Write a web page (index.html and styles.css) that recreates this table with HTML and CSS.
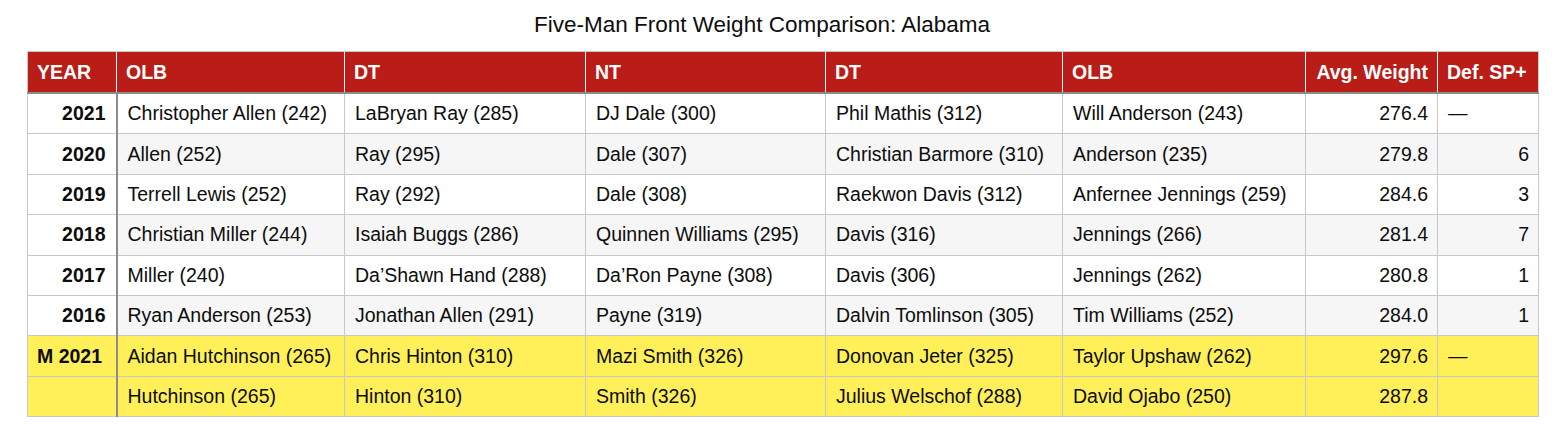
FILE: index.html
```html
<!DOCTYPE html>
<html>
<head>
<meta charset="utf-8">
<link rel="stylesheet" href="styles.css">
</head>
<body>
<div class="page">
  <div class="title">Five-Man Front Weight Comparison: Alabama</div>
  <table class="grid">
    <colgroup>
      <col class="c-year"><col class="c-olb1"><col class="c-dt1"><col class="c-nt"><col class="c-dt2"><col class="c-olb2"><col class="c-avg"><col class="c-sp">
    </colgroup>
    <thead>
      <tr>
        <th>YEAR</th><th>OLB</th><th>DT</th><th>NT</th><th>DT</th><th>OLB</th><th class="num">Avg. Weight</th><th>Def. SP+</th>
      </tr>
    </thead>
    <tbody>
      <tr>
        <td class="year">2021</td><td>Christopher Allen (242)</td><td>LaBryan Ray (285)</td><td>DJ Dale (300)</td><td>Phil Mathis (312)</td><td>Will Anderson (243)</td><td class="num">276.4</td><td>—</td>
      </tr>
      <tr class="alt">
        <td class="year">2020</td><td>Allen (252)</td><td>Ray (295)</td><td>Dale (307)</td><td>Christian Barmore (310)</td><td>Anderson (235)</td><td class="num">279.8</td><td class="num">6</td>
      </tr>
      <tr>
        <td class="year">2019</td><td>Terrell Lewis (252)</td><td>Ray (292)</td><td>Dale (308)</td><td>Raekwon Davis (312)</td><td>Anfernee Jennings (259)</td><td class="num">284.6</td><td class="num">3</td>
      </tr>
      <tr class="alt">
        <td class="year">2018</td><td>Christian Miller (244)</td><td>Isaiah Buggs (286)</td><td>Quinnen Williams (295)</td><td>Davis (316)</td><td>Jennings (266)</td><td class="num">281.4</td><td class="num">7</td>
      </tr>
      <tr>
        <td class="year">2017</td><td>Miller (240)</td><td>Da’Shawn Hand (288)</td><td>Da’Ron Payne (308)</td><td>Davis (306)</td><td>Jennings (262)</td><td class="num">280.8</td><td class="num">1</td>
      </tr>
      <tr class="alt">
        <td class="year">2016</td><td>Ryan Anderson (253)</td><td>Jonathan Allen (291)</td><td>Payne (319)</td><td>Dalvin Tomlinson (305)</td><td>Tim Williams (252)</td><td class="num">284.0</td><td class="num">1</td>
      </tr>
      <tr class="hl">
        <td class="year left">M 2021</td><td>Aidan Hutchinson (265)</td><td>Chris Hinton (310)</td><td>Mazi Smith (326)</td><td>Donovan Jeter (325)</td><td>Taylor Upshaw (262)</td><td class="num">297.6</td><td>—</td>
      </tr>
      <tr class="hl">
        <td class="year left"></td><td>Hutchinson (265)</td><td>Hinton (310)</td><td>Smith (326)</td><td>Julius Welschof (288)</td><td>David Ojabo (250)</td><td class="num">287.8</td><td></td>
      </tr>
    </tbody>
  </table>
</div>
</body>
</html>
```
FILE: styles.css
```css
html, body {
  margin: 0;
  padding: 0;
  background: #ffffff;
}
body {
  font-family: "Liberation Sans", Arial, Helvetica, sans-serif;
  color: #0d0d0d;
}
.page {
  padding: 0 24px 0 27px;
}
.title {
  width: 1511px;
  box-sizing: border-box;
  padding: 10px 41px 0 0;
  height: 51px;
  font-size: 22.5px;
  line-height: 30px;
  text-align: center;
  color: #0d0d0d;
}
.grid {
  width: 1511px;
  table-layout: fixed;
  border-collapse: collapse;
  font-size: 19.5px;
  border: 1px solid #c8c8c8;
}
.c-year { width: 89px; }
.c-olb1 { width: 228px; }
.c-dt1 { width: 241px; }
.c-nt { width: 240px; }
.c-dt2 { width: 237px; }
.c-olb2 { width: 243px; }
.c-avg { width: 132px; }
.c-sp { width: 101px; }

.grid th {
  background: #ba1d18;
  color: #ffffff;
  font-weight: bold;
  text-align: left;
  padding: 0 9px;
  height: 40px;
  border-left: 1px solid #ffffff;
  border-top: 1px solid #c8c8c8;
  border-bottom: 2px solid #8c8c8c;
  white-space: nowrap;
}
.grid th:first-child {
  border-left: 1px solid #c8c8c8;
}
.grid th.num { text-align: right; }
.grid td {
  padding: 0 10px;
  height: 39.4px;
  border: 1px solid #c8c8c8;
  white-space: nowrap;
  background: #ffffff;
}
.grid tr.alt td { background: #f6f6f6; }
.grid tr.alt td.year { background: #ffffff; }
.grid tr.hl td, .grid tr.hl td.year { background: #fff05a; }
.grid td.year {
  font-weight: bold;
  text-align: right;
  border-right: 2px solid #8c8c8c;
}
.grid td.year.left { text-align: left; padding-left: 9px; }
.grid td.num { text-align: right; padding-right: 9px; }
```
